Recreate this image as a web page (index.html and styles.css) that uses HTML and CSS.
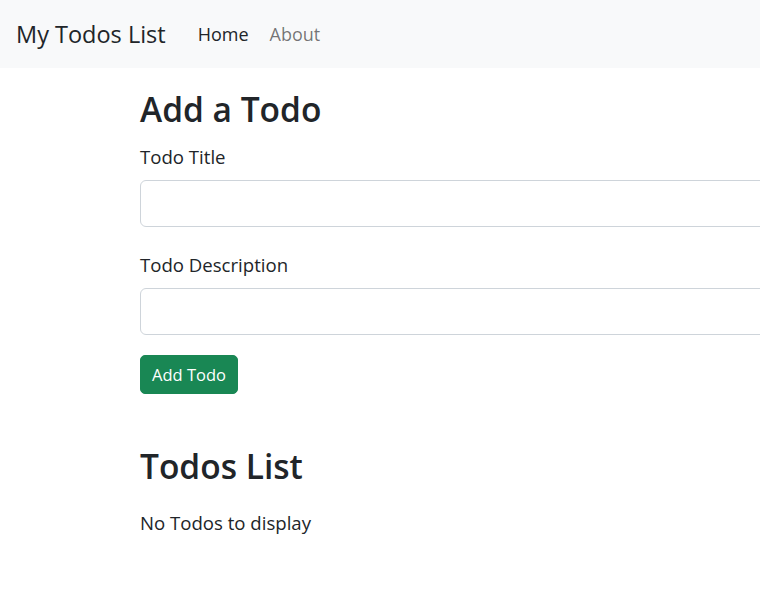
FILE: index.html
```html
<!DOCTYPE html>
<html lang="en">
<head>
<meta charset="utf-8">
<title>My Todos List</title>
<link rel="stylesheet" href="styles.css">
</head>
<body>
<nav class="navbar">
  <a class="brand" href="#">My Todos List</a>
  <ul class="nav-links">
    <li><a class="nav-link active" href="#">Home</a></li>
    <li><a class="nav-link" href="#">About</a></li>
  </ul>
</nav>
<main class="container">
  <h2 class="heading heading-add">Add a Todo</h2>
  <form class="todo-form">
    <div class="field">
      <label class="label" for="title">Todo Title</label>
      <input class="input" id="title" type="text">
    </div>
    <div class="field field-last">
      <label class="label" for="desc">Todo Description</label>
      <input class="input" id="desc" type="text">
    </div>
    <button class="btn" type="button">Add Todo</button>
  </form>
  <h2 class="heading heading-list">Todos List</h2>
  <p class="empty">No Todos to display</p>
</main>
</body>
</html>
```
FILE: styles.css
```css
html, body {
  overflow-x: hidden;
}
body {
  margin: 0;
  font-family: "Open Sans", "Noto Sans", sans-serif;
  font-size: 18.6px;
  line-height: 27px;
  color: #212529;
  background: #fff;
}
.navbar {
  display: flex;
  align-items: center;
  height: 68px;
  padding-left: 16px;
  background: #f8f9fa;
}
.brand {
  font-size: 23.5px;
  line-height: 34px;
  color: #212529;
  text-decoration: none;
  margin-right: 32px;
}
.nav-links {
  display: flex;
  gap: 21px;
  list-style: none;
  margin: 0;
  padding: 0;
  font-size: 18px;
}
.nav-link {
  color: rgba(0, 0, 0, 0.55);
  text-decoration: none;
}
.nav-link.active {
  color: #212529;
}
.container {
  padding-left: 140px;
  width: 1200px;
}
.heading {
  font-size: 33.5px;
  line-height: 43px;
  font-weight: 600;
  margin: 0;
}
.heading-add {
  margin-top: 20px;
  margin-bottom: 12px;
}
.field {
  margin-bottom: 24px;
}
.field-last {
  margin-bottom: 20px;
}
.label {
  display: block;
  margin-bottom: 10px;
}
.input {
  display: block;
  box-sizing: border-box;
  width: 100%;
  height: 47px;
  border: 1px solid #ced4da;
  border-radius: 6px;
  background: #fff;
  font: inherit;
}
.btn {
  display: block;
  box-sizing: border-box;
  height: 39px;
  padding: 0 11px;
  border: 1px solid #198754;
  border-radius: 5px;
  background: #198754;
  color: #fff;
  font: inherit;
  font-size: 16.5px;
}
.heading-list {
  margin-top: 51px;
  margin-bottom: 21px;
}
.empty {
  margin: 0;
}
```
